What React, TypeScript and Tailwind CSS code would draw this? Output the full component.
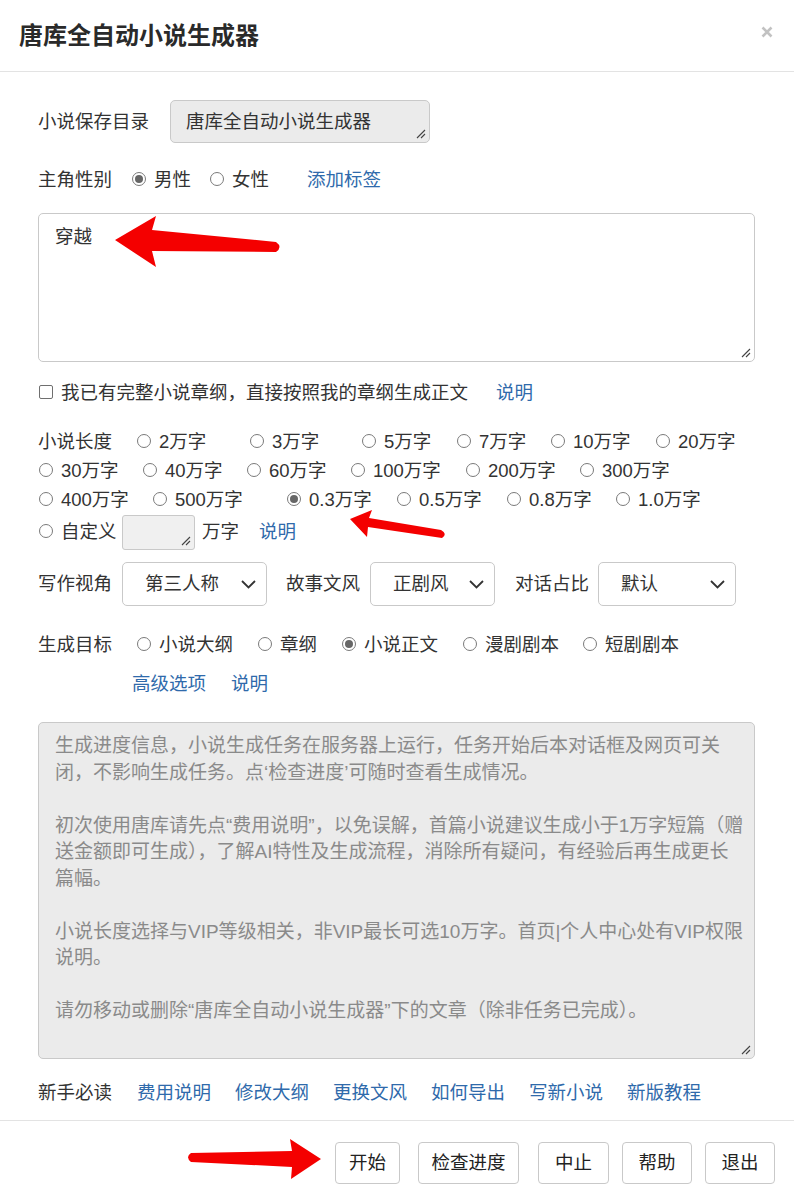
import type { ReactNode } from "react";
import clsx from "clsx";

const Radio = ({ checked }: { checked?: boolean }) => (
  <span className="inline-flex h-[14px] w-[14px] shrink-0 -translate-y-[1px] items-center justify-center rounded-full border border-[#7a7a7a] bg-white">
    {checked && <span className="h-[8px] w-[8px] rounded-full bg-[#666]" />}
  </span>
);

interface OptionProps {
  label: string;
  checked?: boolean;
  className?: string;
}

const RadioOption = ({ label, checked, className }: OptionProps) => (
  <label className={clsx("flex shrink-0 items-center", className)}>
    <Radio checked={checked} />
    <span className="ml-[8px]">{label}</span>
  </label>
);

const Link = ({ children, className }: { children: string; className?: string }) => (
  <a className={clsx("cursor-pointer text-[#2f6aab]", className)}>{children}</a>
);

// little diagonal grip drawn in the corner of resizable boxes
const Grip = () => (
  <svg className="pointer-events-none absolute bottom-[3px] right-[3px]" width="10" height="10" viewBox="0 0 10 10">
    <path d="M9 1 L1 9 M9 5 L5 9" stroke="#444" strokeWidth="1.1" />
  </svg>
);

const Select = ({ value, className }: { value: string; className?: string }) => (
  <div
    className={clsx(
      "flex h-[44px] shrink-0 items-center justify-between rounded-[5px] border border-[#c9c9c9] bg-white pl-[22px] pr-[10px]",
      className
    )}
  >
    <span>{value}</span>
    <svg width="15" height="9" viewBox="0 0 15 9">
      <path d="M1 1 L7.5 7.5 L14 1" fill="none" stroke="#333" strokeWidth="1.8" />
    </svg>
  </div>
);

const FooterButton = ({ children, className }: { children: string; className?: string }) => (
  <button
    className={clsx(
      "flex h-[42px] items-center justify-center rounded-[4px] border border-[#c9c9c9] bg-white text-[#222]",
      className
    )}
  >
    {children}
  </button>
);

// red call-out arrows drawn on top of the dialog
const Arrows = () => (
  <svg className="pointer-events-none absolute left-0 top-0" width="794" height="1202" viewBox="0 0 794 1202">
    <path
      d="M115 240 L156 216 L152 230 L276 242 Q283 247 276 252 L152 251 L156 267 Z"
      fill="#f40000"
    />
    <path d="M350 519 L372 510 L369 518 L441 530 Q448 534 442 538 L368 527 L367 537 Z" fill="#f40000" />
    <path
      d="M191 1153 L292 1151 L290 1139 L321 1159 L291 1179 L292 1167 L191 1162 Q185 1157 191 1153 Z"
      fill="#f40000"
    />
  </svg>
);

const notice: ReactNode[] = [
  "生成进度信息，小说生成任务在服务器上运行，任务开始后本对话框及网页可关闭，不影响生成任务。点‘检查进度’可随时查看生成情况。",
  <>
    初次使用唐库请先点“费用说明”，以免误解，首篇小说建议生成小于1万字短篇（赠送金额即可生成），了解AI特性及生成流程，消除所有疑问，有经验后再生成更长
    <span className="whitespace-nowrap">篇幅。</span>
  </>,
  "小说长度选择与VIP等级相关，非VIP最长可选10万字。首页|个人中心处有VIP权限说明。",
  "请勿移动或删除“唐库全自动小说生成器”下的文章（除非任务已完成）。",
];

const guideLinks = ["费用说明", "修改大纲", "更换文风", "如何导出", "写新小说", "新版教程"];

export default function App() {
  return (
    <div className="relative h-[1202px] w-[794px] overflow-hidden bg-white font-['Liberation_Sans','Noto_Sans_CJK_SC',sans-serif] text-[18.5px] leading-[26px] text-[#333]">
      {/* header */}
      <div className="flex h-[72px] items-center justify-between border-b border-[#e3e3e3] pl-[19px] pr-[21px]">
        <h1 className="text-[24px] font-semibold text-[#2a2a2a]">唐库全自动小说生成器</h1>
        <svg width="12" height="12" viewBox="0 0 12 12" className="-translate-y-[4px]">
          <path d="M1.5 1.5 L10.5 10.5 M10.5 1.5 L1.5 10.5" stroke="#c2c2c2" strokeWidth="2.6" />
        </svg>
      </div>

      <div className="pl-[38px] pr-[39px] pt-[28px]">
        <div className="flex items-center">
          <span className="w-[132px]">小说保存目录</span>
          <div className="relative h-[43px] w-[260px] rounded-[5px] border border-[#c9c9c9] bg-[#ebebeb] pl-[15px] pt-[8px]">
            唐库全自动小说生成器
            <Grip />
          </div>
        </div>

        <div className="mt-[24px] flex items-center">
          <span className="w-[94px]">主角性别</span>
          <RadioOption label="男性" checked className="w-[78px]" />
          <RadioOption label="女性" className="w-[97px]" />
          <Link>添加标签</Link>
        </div>

        <div className="relative mt-[20px] h-[149px] rounded-[5px] border border-[#c9c9c9] bg-white pl-[16px] pt-[10px]">
          穿越
          <Grip />
        </div>

        <div className="mt-[18px] flex items-center">
          <span className="ml-[1px] h-[14px] w-[14px] -translate-y-[1px] rounded-[2px] border border-[#6f6f6f] bg-white" />
          <span className="ml-[8px] w-[435px]">我已有完整小说章纲，直接按照我的章纲生成正文</span>
          <Link>说明</Link>
        </div>

        {/* novel length options */}
        <div className="mt-[21px]">
          <div className="flex h-[29px] items-center">
            <span className="w-[99px]">小说长度</span>
            <RadioOption label="2万字" className="w-[113px]" />
            <RadioOption label="3万字" className="w-[112px]" />
            <RadioOption label="5万字" className="w-[95px]" />
            <RadioOption label="7万字" className="w-[94px]" />
            <RadioOption label="10万字" className="w-[105px]" />
            <RadioOption label="20万字" />
          </div>
          <div className="flex h-[29px] items-center pl-[1px]">
            <RadioOption label="30万字" className="w-[104px]" />
            <RadioOption label="40万字" className="w-[104px]" />
            <RadioOption label="60万字" className="w-[104px]" />
            <RadioOption label="100万字" className="w-[115px]" />
            <RadioOption label="200万字" className="w-[114px]" />
            <RadioOption label="300万字" />
          </div>
          <div className="flex h-[29px] items-center pl-[1px]">
            <RadioOption label="400万字" className="w-[114px]" />
            <RadioOption label="500万字" className="w-[134px]" />
            <RadioOption label="0.3万字" checked className="w-[110px]" />
            <RadioOption label="0.5万字" className="w-[110px]" />
            <RadioOption label="0.8万字" className="w-[109px]" />
            <RadioOption label="1.0万字" />
          </div>
          <div className="flex h-[36px] items-center pl-[1px]">
            <RadioOption label="自定义" className="w-[83px]" />
            <div className="relative h-[35px] w-[73px] rounded-[3px] border border-[#c9c9c9] bg-[#f0f0f0]">
              <Grip />
            </div>
            <span className="ml-[7px] w-[57px]">万字</span>
            <Link>说明</Link>
          </div>
        </div>

        <div className="mt-[12px] flex items-center">
          <span className="w-[84px]">写作视角</span>
          <Select value="第三人称" className="w-[145px]" />
          <span className="ml-[19px] w-[84px]">故事文风</span>
          <Select value="正剧风" className="w-[125px]" />
          <span className="ml-[20px] w-[83px]">对话占比</span>
          <Select value="默认" className="w-[138px]" />
        </div>

        <div className="mt-[26px] flex items-center">
          <span className="w-[99px]">生成目标</span>
          <RadioOption label="小说大纲" className="w-[121px]" />
          <RadioOption label="章纲" className="w-[84px]" />
          <RadioOption label="小说正文" checked className="w-[121px]" />
          <RadioOption label="漫剧剧本" className="w-[120px]" />
          <RadioOption label="短剧剧本" />
        </div>

        <div className="mt-[13px] flex items-center pl-[94px]">
          <Link className="w-[99px]">高级选项</Link>
          <Link>说明</Link>
        </div>

        {/* progress / notice box */}
        <div className="relative mt-[25px] h-[337px] rounded-[5px] border border-[#c9c9c9] bg-[#ebebeb] pl-[16px] pr-[5px] pt-[10px] text-[19px] leading-[26.5px] text-[#8a8a8a]">
          {notice.map((text, i) => (
            <p key={i} className={clsx(i > 0 && "mt-[26.5px]")}>
              {text}
            </p>
          ))}
          <Grip />
        </div>

        <div className="mt-[21px] flex items-center">
          <span className="w-[99px]">新手必读</span>
          {guideLinks.map((text) => (
            <Link key={text} className="w-[98px]">
              {text}
            </Link>
          ))}
        </div>
      </div>

      {/* footer buttons */}
      <div className="mt-[14px] flex justify-end border-t border-[#e3e3e3] pr-[19px] pt-[21px]">
        <FooterButton className="w-[65px]">开始</FooterButton>
        <FooterButton className="ml-[18px] w-[101px]">检查进度</FooterButton>
        <FooterButton className="ml-[19px] w-[71px]">中止</FooterButton>
        <FooterButton className="ml-[13px] w-[70px]">帮助</FooterButton>
        <FooterButton className="ml-[13px] w-[70px]">退出</FooterButton>
      </div>

      <Arrows />
    </div>
  );
}
